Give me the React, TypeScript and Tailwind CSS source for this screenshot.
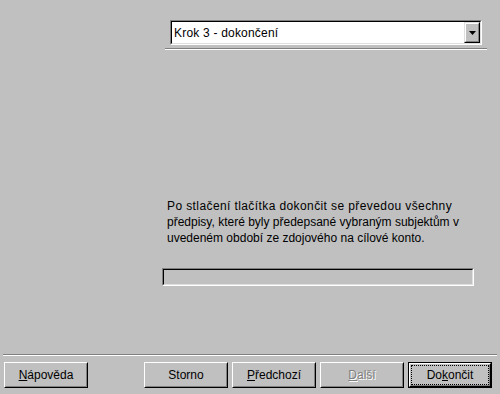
import React from "react";

function Btn({
  children,
  isDefault,
  disabled,
}: {
  children: React.ReactNode;
  isDefault?: boolean;
  disabled?: boolean;
}) {
  const face = (
    <div className="h-full border border-t-white border-l-white border-b-black border-r-black">
      <div className="h-full border border-t-[#c0c0c0] border-l-[#c0c0c0] border-b-[#808080] border-r-[#808080] flex items-center justify-center">
        {isDefault ? (
          <div className="h-full w-full border border-dotted border-black flex items-center justify-center">
            {children}
          </div>
        ) : (
          <span className={disabled ? "text-[#808080] [text-shadow:1px_1px_0_#fff]" : ""}>{children}</span>
        )}
      </div>
    </div>
  );
  if (isDefault) {
    return <div className="w-[84px] h-[26px] border border-black">{face}</div>;
  }
  return <div className="w-[84px] h-[26px]">{face}</div>;
}

export default function App() {
  return (
    <div
      className="w-[500px] h-[394px] bg-[#c0c0c0] flex flex-col text-[12px] text-black leading-[16px]"
      style={{ fontFamily: '"Liberation Sans", Arial, sans-serif' }}
    >
      {/* step selector */}
      <div className="pt-[20px] pl-[170px]">
        <div className="w-[312px] h-[25px] border border-t-[#808080] border-l-[#808080] border-b-white border-r-white">
          <div className="h-full border border-t-black border-l-black border-b-[#dfdfdf] border-r-[#dfdfdf] bg-white flex items-center">
            <span className="flex-1 pl-[2px] tracking-[0.2px]">Krok 3 - dokončení</span>
            <div className="w-[16px] h-full border border-t-[#dfdfdf] border-l-[#dfdfdf] border-b-black border-r-black bg-[#c0c0c0]">
              <div className="h-full border border-t-white border-l-white border-b-[#808080] border-r-[#808080] flex items-center justify-center">
                <svg width="7" height="4" viewBox="0 0 7 4">
                  <path d="M0 0h7L3.5 4z" fill="#000" />
                </svg>
              </div>
            </div>
          </div>
        </div>
      </div>
      <div className="ml-[165px] mt-[3px] w-[322px] h-[2px] border-t border-t-[#808080] border-b border-b-white" />

      {/* description */}
      <div className="ml-[167px] mt-[148px] w-[320px] whitespace-nowrap">
        <div className="tracking-[0.4px]">Po stlačení tlačítka dokončit se převedou všechny</div>
        <div>předpisy, které byly předepsané vybraným subjektům v</div>
        <div>uvedeném období ze zdojového na cílové konto.</div>
      </div>

      {/* progress */}
      <div className="ml-[162px] mt-[22px] w-[312px] h-[18px] border border-t-[#808080] border-l-[#808080] border-b-white border-r-white">
        <div className="h-full border border-t-black border-l-black border-b-[#dfdfdf] border-r-[#dfdfdf]" />
      </div>

      {/* footer */}
      <div className="ml-[3px] mt-auto w-[494px] h-[2px] border-t border-t-[#808080] border-b border-b-white" />
      <div className="flex items-center pl-[4px] pr-[8px] pt-[6px] pb-[6px]">
        <Btn>
          <u>N</u>ápověda
        </Btn>
        <div className="flex-1" />
        <div className="flex gap-[4px]">
          <Btn>Storno</Btn>
          <Btn>
            <u>P</u>ředchozí
          </Btn>
          <Btn disabled>
            <u>D</u>alší
          </Btn>
          <Btn isDefault>
            Do<u>k</u>ončit
          </Btn>
        </div>
      </div>
    </div>
  );
}
